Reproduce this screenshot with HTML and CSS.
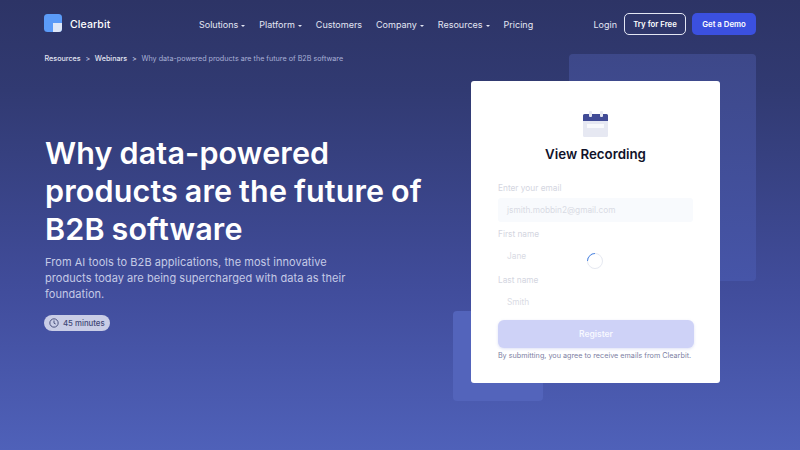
FILE: index.html
```html
<!DOCTYPE html>
<html lang="en">
<head>
    <meta charset="UTF-8">
    <meta name="viewport" content="width=device-width, initial-scale=1.0">
    <title>Why data-powered products are the future of B2B software</title>
    <link rel="stylesheet" href="styles.css">
</head>
<body>
    <div class="square square-top"></div>
    <div class="square square-bottom"></div>

    <!-- navigation -->
    <nav class="navbar">
        <a href="#" class="logo">
            <svg width="18" height="18" viewBox="0 0 18 18">
                <rect width="18" height="18" rx="3.5" fill="#5b9bf8"/>
                <path d="M9 9h9v5.500a3.500 3.500 0 0 1-3.500 3.500H9z" fill="#dfe8f8"/>
            </svg>
            <span>Clearbit</span>
        </a>
        <div class="nav-links">
            <a href="#" class="has-menu">Solutions</a>
            <a href="#" class="has-menu">Platform</a>
            <a href="#">Customers</a>
            <a href="#" class="has-menu">Company</a>
            <a href="#" class="has-menu">Resources</a>
            <a href="#">Pricing</a>
        </div>
        <div class="nav-actions">
            <a href="#" class="login">Login</a>
            <a href="#" class="btn btn-outline">Try for Free</a>
            <a href="#" class="btn btn-solid">Get a Demo</a>
        </div>
    </nav>

    <div class="breadcrumb">
        <a href="#">Resources</a>
        <span class="sep">&gt;</span>
        <a href="#">Webinars</a>
        <span class="sep">&gt;</span>
        <span class="current">Why data-powered products are the future of B2B software</span>
    </div>

    <main class="content">
        <section class="intro">
            <h1>Why data-powered products are the future of B2B software</h1>
            <p>From AI tools to B2B applications, the most innovative products today are being supercharged with data as their foundation.</p>
            <div class="duration">
                <svg width="10" height="10" viewBox="0 0 12 12" fill="none" stroke="#3f4775" stroke-width="1.100">
                    <circle cx="6" cy="6" r="5"/>
                    <path d="M6 3v3.200l2 1"/>
                </svg>
                <span>45 minutes</span>
            </div>
        </section>

        <!-- form card -->
        <section class="card">
            <svg class="calendar" width="26" height="26" viewBox="0 0 26 26">
                <rect y="3" width="25" height="23" rx="1.500" fill="#e6e8f2"/>
                <path d="M0 10V4.500A1.500 1.500 0 0 1 1.500 3H23.500A1.500 1.500 0 0 1 25 4.500V10z" fill="#414b96"/>
                <rect x="6" width="3" height="6" rx="1" fill="#e6e8f2"/>
                <rect x="17" width="3" height="6" rx="1" fill="#e6e8f2"/>
                <rect x="4" y="13" width="17" height="4" fill="#f8f9fc"/>
            </svg>
            <h2>View Recording</h2>
            <div class="form-wrap">
                <label>Enter your email</label>
                <div class="field field-filled">jsmith.mobbin2@gmail.com</div>
                <label>First name</label>
                <div class="field">Jane</div>
                <label>Last name</label>
                <div class="field">Smith</div>
                <button class="register">Register</button>
                <div class="spinner"></div>
            </div>
            <p class="note">By submitting, you agree to receive emails from Clearbit.</p>
        </section>
    </main>
</body>
</html>
```

FILE: styles.css
```css
/* base */
body {
    margin: 0;
    height: 450px;
    overflow: hidden;
    position: relative;
    font-family: 'Inter', 'Liberation Sans', sans-serif;
    color: #fff;
    background: linear-gradient(180deg, #2d3466 0%, #313a72 20%, #414d9c 65%, #4f61b9 100%);
}

a {
    color: inherit;
    text-decoration: none;
}

/* background squares */
.square {
    position: absolute;
    background-color: #3e4a90;
    border-radius: 4px;
}

.square-top {
    left: 569px;
    top: 54px;
    width: 187px;
    height: 227px;
    background: linear-gradient(180deg, #3d4889 0%, #4655a8 100%);
}

.square-bottom {
    left: 453px;
    top: 311px;
    width: 90px;
    height: 90px;
    background: #5364bb;
}

/* navigation */
.navbar {
    position: relative;
    display: flex;
    align-items: center;
    height: 22px;
    padding: 13px 44px 0;
}

.logo {
    display: flex;
    align-items: center;
    gap: 8px;
    width: 155px;
    font-size: 10.500px;
    font-weight: 500;
    letter-spacing: 0.1px;
}

.logo svg {
    margin-bottom: 2px;
}

.nav-links {
    display: flex;
    gap: 14px;
    font-size: 9px;
    color: #e3e6f3;
}

.has-menu::after {
    content: '';
    display: inline-block;
    margin-left: 3px;
    vertical-align: 1px;
    border: 2.500px solid transparent;
    border-top-color: #e3e6f3;
    border-bottom: 0;
}

.nav-actions {
    display: flex;
    align-items: center;
    margin-left: auto;
    font-size: 9px;
    color: #e3e6f3;
}

.login {
    margin-right: 7px;
}

.btn {
    display: flex;
    align-items: center;
    justify-content: center;
    box-sizing: border-box;
    height: 22px;
    border-radius: 5px;
    font-size: 7.800px;
    font-weight: 600;
    color: #fff;
}

.btn-outline {
    width: 62px;
    border: 1px solid #e3e6f3;
    margin-right: 6px;
}

.btn-solid {
    width: 64px;
    background-color: #3b50df;
}

/* breadcrumb */
.breadcrumb {
    position: relative;
    display: flex;
    gap: 4.700px;
    margin: 19px 0 0 44.500px;
    font-size: 7.200px;
    font-weight: 500;
    line-height: 10px;
    color: #e3e6f3;
}

.sep {
    color: #c9cde6;
    font-weight: 400;
}

.current {
    color: #a9b0d6;
    font-weight: 400;
}

/* main area */
.content {
    position: relative;
    display: flex;
    justify-content: space-between;
    padding: 17px 80px 0 45px;
}

.intro {
    width: 392px;
    padding-top: 53px;
}

.intro h1 {
    margin: 0;
    font-size: 30.500px;
    font-weight: 600;
    line-height: 38px;
    letter-spacing: 0.15px;
    word-spacing: -1px;
}

.intro p {
    margin: 6px 0 0;
    width: 320px;
    font-size: 11px;
    line-height: 16px;
    letter-spacing: 0.05px;
    color: #c5cae6;
}

.duration {
    display: inline-flex;
    align-items: center;
    gap: 4px;
    height: 16px;
    margin: 13px 0 0 -1px;
    padding: 0 5px;
    border-radius: 8px;
    background-color: #c9cde6;
    color: #3f4775;
    font-size: 7.800px;
    font-weight: 500;
}

/* form card */
.card {
    box-sizing: border-box;
    width: 249px;
    height: 302px;
    padding-top: 30px;
    background-color: #fff;
    border-radius: 3px;
    text-align: center;
    color: #10122a;
}

.calendar {
    display: block;
    margin: 0 auto;
}

.card h2 {
    margin: 9px 0 0;
    font-size: 13.300px;
    font-weight: 600;
    line-height: 16px;
}

.form-wrap {
    position: relative;
    margin: 20px 27px 0;
    text-align: left;
}

.form-wrap label {
    display: block;
    font-size: 8.300px;
    line-height: 12px;
    color: #d4d6df;
}

.field {
    height: 24px;
    margin: 4px 0 6px;
    padding-left: 9px;
    font-size: 8.300px;
    line-height: 24px;
    color: #d9dbe4;
}

.field-filled {
    background-color: #f8fafd;
    border-radius: 3px;
}

.register {
    display: block;
    width: 196px;
    height: 28px;
    margin-top: 6px;
    padding: 0;
    border: none;
    border-radius: 6px;
    background-color: #ced2f7;
    box-shadow: 0 1px 3px rgba(120, 130, 220, 0.25);
    color: #f7f8ff;
    font-family: inherit;
    font-size: 8.500px;
    font-weight: 600;
}

.spinner {
    position: absolute;
    left: 89px;
    top: 71px;
    box-sizing: border-box;
    width: 16px;
    height: 16px;
    border: 1.500px solid #e6e9f1;
    border-left-color: #4f86e0;
    border-radius: 50%;
    transform: rotate(45deg);
}

.note {
    margin: 3px 0 0;
    padding-right: 2px;
    font-size: 7.200px;
    line-height: 10px;
    letter-spacing: 0.02px;
    color: #7d80a3;
}
```
